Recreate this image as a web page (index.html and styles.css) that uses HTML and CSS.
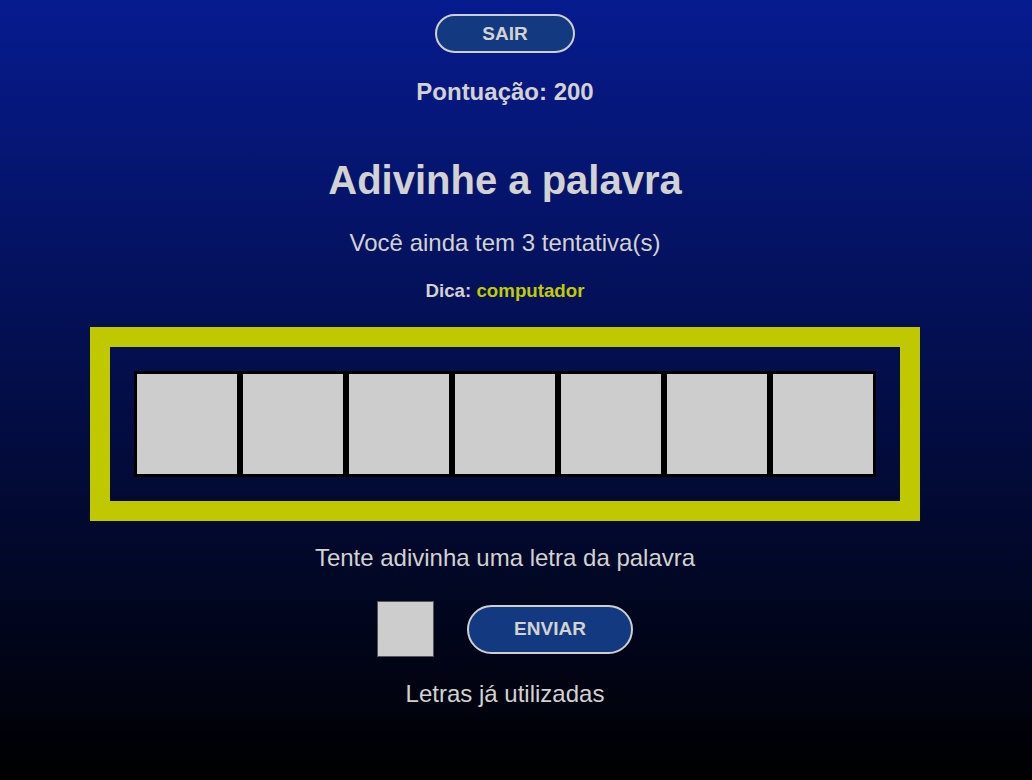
FILE: index.html
```html
<!DOCTYPE html>
<html lang="pt-BR">
<head>
<meta charset="utf-8">
<title>Adivinhe a palavra</title>
<link rel="stylesheet" href="styles.css">
</head>
<body>
<main class="game">
  <button class="btn btn-sair">SAIR</button>
  <p class="score">Pontuação: 200</p>
  <h1 class="title">Adivinhe a palavra</h1>
  <p class="attempts">Você ainda tem 3 tentativa(s)</p>
  <p class="hint">Dica: <span class="hint-word">computador</span></p>
  <div class="board">
    <div class="tiles">
      <div class="tile"></div>
      <div class="tile"></div>
      <div class="tile"></div>
      <div class="tile"></div>
      <div class="tile"></div>
      <div class="tile"></div>
      <div class="tile"></div>
    </div>
  </div>
  <p class="prompt">Tente adivinha uma letra da palavra</p>
  <div class="guess">
    <input class="letter-input" type="text" maxlength="1">
    <button class="btn btn-enviar">ENVIAR</button>
  </div>
  <p class="used">Letras já utilizadas</p>
</main>
</body>
</html>
```
FILE: styles.css
```css
html, body {
  margin: 0;
  padding: 0;
}
body {
  min-height: 100vh;
  background: linear-gradient(to bottom, #061b8f 0%, #000000 100%);
  color: #d2d2d2;
  font-family: "Liberation Sans", Arial, sans-serif;
}
.game {
  display: flex;
  flex-direction: column;
  align-items: center;
  padding: 14px 22px 0 0;
}
.btn {
  background: #133a80;
  color: #d2d2d2;
  border: 2px solid #cfcfcf;
  border-radius: 20px;
  font-family: "Liberation Sans", Arial, sans-serif;
  font-weight: bold;
  font-size: 19px;
  padding: 0;
}
.btn-sair {
  width: 140px;
  height: 39px;
}
.score {
  margin: 25px 0 0;
  font-size: 24px;
  font-weight: bold;
  line-height: 28px;
}
.title {
  margin: 51px 0 0;
  font-size: 40px;
  line-height: 46px;
}
.attempts {
  margin: 26px 0 0;
  font-size: 24px;
  line-height: 28px;
}
.hint {
  margin: 23px 0 0;
  font-size: 18.72px;
  font-weight: bold;
  line-height: 22px;
}
.hint-word {
  color: #c2ca00;
}
.board {
  margin-top: 25px;
  border: 20px solid #c0c800;
  padding: 24px;
}
.tiles {
  display: flex;
}
.tile {
  width: 100px;
  height: 100px;
  background: #cdcdcd;
  border: 3px solid #000;
}
.prompt {
  margin: 23px 0 0;
  font-size: 24px;
  line-height: 28px;
}
.guess {
  display: flex;
  align-items: center;
  gap: 33px;
  margin-top: 29px;
}
.letter-input {
  width: 55px;
  height: 54px;
  padding: 0;
  border: 1px solid #555;
  background: #cdcdcd;
  box-sizing: content-box;
}
.btn-enviar {
  width: 166px;
  height: 49px;
  border-radius: 25px;
}
.used {
  margin: 23px 0 0;
  font-size: 24px;
  line-height: 28px;
}
```
